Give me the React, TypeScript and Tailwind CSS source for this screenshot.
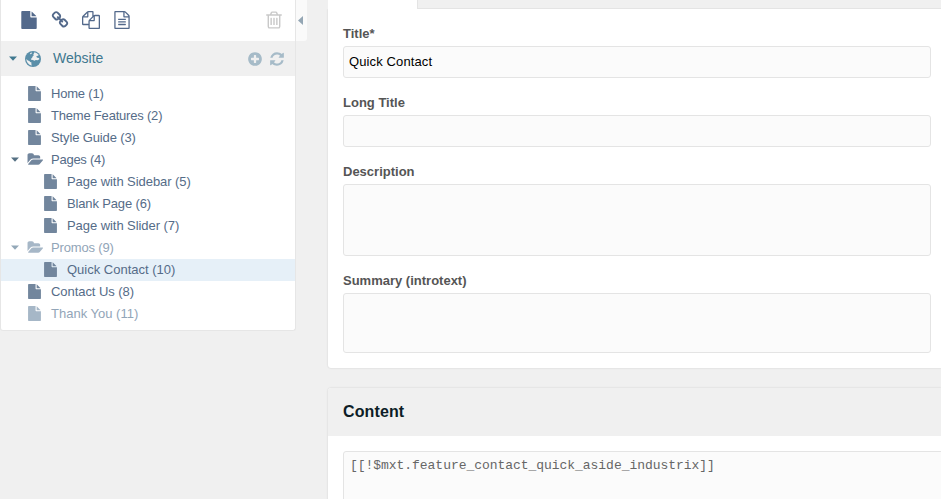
import React from "react";

const FILE =
  "M1152 512v-472q22 14 36 28l408 408q14 14 28 36h-472zm-128 32q0 40 28 68t68 28h544v1056q0 40-28 68t-68 28h-1344q-40 0-68-28t-28-68v-1600q0-40 28-68t68-28h800v544z";
const FILE_TEXT =
  "M1596 380q28 28 48 76t20 88v1152q0 40-28 68t-68 28h-1344q-40 0-68-28t-28-68v-1600q0-40 28-68t68-28h896q40 0 88 20t76 48zm-444-244v376h376q-10-29-22-41l-313-313q-12-12-41-22zm384 1528v-1024h-416q-40 0-68-28t-28-68v-416h-768v1536h1280zm-1024-864q0-14 9-23t23-9h704q14 0 23 9t9 23v64q0 14-9 23t-23 9h-704q-14 0-23-9t-9-23v-64zm736 224q14 0 23 9t9 23v64q0 14-9 23t-23 9h-704q-14 0-23-9t-9-23v-64q0-14 9-23t23-9h704zm0 256q14 0 23 9t9 23v64q0 14-9 23t-23 9h-704q-14 0-23-9t-9-23v-64q0-14 9-23t23-9h704z";
const COPY =
  "M1696 384q40 0 68 28t28 68v1216q0 40-28 68t-68 28h-960q-40 0-68-28t-28-68v-288h-544q-40 0-68-28t-28-68v-672q0-40 20-88t48-76l408-408q28-28 76-48t88-20h416q40 0 68 28t28 68v328q68-40 128-40h416zm-544 213l-299 299h299v-299zm-640-384l-299 299h299v-299zm196 647l316-316v-416h-384v416q0 40-28 68t-68 28h-416v640h512v-256q0-40 20-88t48-76zm956 804v-1152h-384v416q0 40-28 68t-68 28h-416v640h896z";
const TRASH =
  "M704 736v576q0 14-9 23t-23 9h-64q-14 0-23-9t-9-23v-576q0-14 9-23t23-9h64q14 0 23 9t9 23zm256 0v576q0 14-9 23t-23 9h-64q-14 0-23-9t-9-23v-576q0-14 9-23t23-9h64q14 0 23 9t9 23zm256 0v576q0 14-9 23t-23 9h-64q-14 0-23-9t-9-23v-576q0-14 9-23t23-9h64q14 0 23 9t9 23zm128 724v-948h-896v948q0 22 7 40.5t14.5 27 10.5 8.5h832q3 0 10.5-8.5t14.5-27 7-40.5zm-672-1076h448l-48-117q-7-9-17-11h-317q-10 2-17 11zm928 32v64q0 14-9 23t-23 9h-96v948q0 83-47 143.5t-113 60.5h-832q-66 0-113-58.5t-47-141.5v-952h-96q-14 0-23-9t-9-23v-64q0-14 9-23t23-9h309l70-167q15-37 54-63t79-26h320q40 0 79 26t54 63l70 167h309q14 0 23 9t9 23z";
const LINK =
  "M1520 1216q0-40-28-68l-208-208q-28-28-68-28-42 0-72 32 3 3 19 18.5t21.5 21.5 15 19 13 25.5 3.5 27.5q0 40-28 68t-68 28q-15 0-27.5-3.5t-25.5-13-19-15-21.5-21.5-18.5-19q-33 31-33 73 0 40 28 68l206 207q27 27 68 27 40 0 68-26l147-146q28-28 28-67zm-703-705q0-40-28-68l-206-207q-28-28-68-28-39 0-68 27l-147 146q-28 28-28 67 0 40 28 68l208 208q27 27 68 27 42 0 72-31-3-3-19-18.5t-21.5-21.5-15-19-13-25.5-3.5-27.5q0-40 28-68t68-28q15 0 27.5 3.5t25.5 13 19 15 21.5 21.5 18.5 19q33-31 33-73zm895 705q0 120-85 203l-147 146q-83 83-203 83-121 0-204-85l-206-207q-83-83-83-203 0-123 88-209l-88-88q-86 88-208 88-120 0-204-84l-208-208q-84-84-84-204t85-203l147-146q83-83 203-83 121 0 204 85l206 207q83 83 83 203 0 123-88 209l88 88q86-88 208-88 120 0 204 84l208 208q84 84 84 204z";
const PLUS =
  "M1344 960v-128q0-26-19-45t-45-19h-256v-256q0-26-19-45t-45-19h-128q-26 0-45 19t-19 45v256h-256q-26 0-45 19t-19 45v128q0 26 19 45t45 19h256v256q0 26 19 45t45 19h128q26 0 45-19t19-45v-256h256q26 0 45-19t19-45zm320-64q0 209-103 385.5t-279.5 279.5-385.5 103-385.5-103-279.5-279.5-103-385.5 103-385.5 279.5-279.5 385.5-103 385.5 103 279.5 279.5 103 385.5z";
const REFRESH =
  "M1639 1056q0 5-1 7-64 268-268 434.5t-478 166.5q-146 0-282.5-55t-243.5-157l-129 129q-19 19-45 19t-45-19-19-45v-448q0-26 19-45t45-19h448q26 0 45 19t19 45-19 45l-137 137q71 66 161 102t187 36q134 0 250-65t186-179q11-17 53-117 8-23 30-23h192q13 0 22.5 9.5t9.5 22.5zm25-800v448q0 26-19 45t-45 19h-448q-26 0-45-19t-19-45 19-45l138-138q-148-137-349-137-134 0-250 65t-186 179q-11 17-53 117-8 23-30 23h-199q-13 0-22.5-9.5t-9.5-22.5v-7q65-268 270-434.5t480-166.5q146 0 284 55.5t245 156.5l130-129q19-19 45-19t45 19 19 45z";
const FOLDER =
  "M1943 952q0 31-31 66l-336 396q-43 51-120.5 86.5t-143.5 35.5h-1088q-34 0-60.5-13t-26.5-43q0-31 31-66l336-396q43-51 120.5-86.5t143.5-35.5h1088q34 0 60.5 13t26.5 43zm-343-344v160h-832q-94 0-197 47.5t-164 119.5l-337 396-5 6q0-4-.5-12.5t-.5-12.5v-960q0-92 66-158t158-66h320q92 0 158 66t66 158v32h544q92 0 158 66t66 158z";

function Icon({ d, className, box = "0 0 1792 1792" }: { d: string; className: string; box?: string }) {
  return (
    <svg viewBox={box} fill="currentColor" className={`block shrink-0 ${className}`}>
      <path d={d} />
    </svg>
  );
}

function Globe() {
  return (
    <svg viewBox="0 0 16 16" className="ml-2 block size-4 shrink-0">
      <circle cx="8" cy="8" r="8" fill="#5b8fa9" />
      <path
        fill="#f0f0f0"
        d="M9.4 1.3l2.5.9 1.9 1.9-.9.6-1.3.2-.2 1.2 1 .7 1.7.2.2 1.3-1.6.9-1.9-.2-1.4.8-1.5-.9-1.7-.2-.3-1 1.2-.7.3-1.3 1.3-1.1-.4-1.1.6-1zM1.3 8.1l1.6 1.3 1.5.5.7 1 1.4.6-.2 1.5.6 1.6-2-.6-2-1.8-1.2-2zM5 2.4l1.3-.8.8.5-1 .9-1 .2z"
      />
    </svg>
  );
}

function CaretDown() {
  return (
    <svg viewBox="0 0 8 5" className="h-[5px] w-2 shrink-0" fill="currentColor">
      <path d="M0 .5h8L4 4.8z" />
    </svg>
  );
}

type Item = { label: string; depth: number; tracking: string; folder?: boolean; faded?: boolean; selected?: boolean };

const items: Item[] = [
  { label: "Home (1)", depth: 0, tracking: "tracking-[-0.2px]" },
  { label: "Theme Features (2)", depth: 0, tracking: "tracking-[-0.2px]" },
  { label: "Style Guide (3)", depth: 0, tracking: "tracking-[-0.13px]" },
  { label: "Pages (4)", depth: 0, tracking: "tracking-[-0.25px]", folder: true },
  { label: "Page with Sidebar (5)", depth: 1, tracking: "tracking-[-0.06px]" },
  { label: "Blank Page (6)", depth: 1, tracking: "tracking-[-0.15px]" },
  { label: "Page with Slider (7)", depth: 1, tracking: "tracking-[-0.06px]" },
  { label: "Promos (9)", depth: 0, tracking: "tracking-[-0.15px]", folder: true, faded: true },
  { label: "Quick Contact (10)", depth: 1, tracking: "tracking-normal", selected: true },
  { label: "Contact Us (8)", depth: 0, tracking: "tracking-[-0.06px]" },
  { label: "Thank You (11)", depth: 0, tracking: "tracking-normal", faded: true },
];

function TreeRow({ item }: { item: Item }) {
  return (
    <li className={`flex h-[22px] items-center ${item.depth ? "pl-[26px]" : "pl-[10px]"} ${item.selected ? "bg-[#e6f0f8]" : ""}`}>
      <div className="flex items-center">
        <span className={`flex w-4 shrink-0 pb-px ${item.faded ? "text-[#93a8b8]" : "text-[#557083]"}`}>
          {item.folder && <CaretDown />}
        </span>
        <span className={`flex w-6 shrink-0 pb-px ${item.faded ? "text-[#a6b7c7]" : "text-[#72869d]"}`}>
          {item.folder ? (
            <Icon d={FOLDER} box="0 0 1943 1792" className="h-[15px] w-[16px]" />
          ) : (
            <Icon d={FILE} box="128 0 1536 1792" className="ml-px h-[15px] w-[13px]" />
          )}
        </span>
        <span className={`whitespace-nowrap text-[13px] leading-[22px] ${item.tracking} ${item.faded ? "text-[#92a5b8]" : "text-[#556c88]"}`}>
          {item.label}
        </span>
      </div>
    </li>
  );
}

function Sidebar() {
  return (
    <aside className="flex h-[331px] w-[308px] shrink-0 items-start">
      <div className="h-[331px] w-[296px] shrink-0 rounded-b-[3px] border-x border-b border-[#e6e6e6] bg-white">
        <div className="flex h-[41px] items-center pb-[2px] pl-[19px] text-[#53698b]">
          <Icon d={FILE} className="size-[18px]" />
          <Icon d={LINK} className="ml-[13px] size-[18px]" />
          <Icon d={COPY} className="ml-[13px] size-[18px]" />
          <Icon d={FILE_TEXT} className="ml-[13px] size-[18px]" />
          <Icon d={TRASH} className="ml-auto mr-[11px] size-5 text-[#c9c9c9]" />
        </div>
        <div className="flex h-[35px] items-center bg-[#f0f0f0] pl-[8px] text-[#40788f]">
          <CaretDown />
          <Globe />
          <span className="ml-3 pb-[2px] text-[14px] leading-[20px]">Website</span>
          <Icon d={PLUS} className="ml-auto size-4 text-[#a6bbc8]" />
          <Icon d={REFRESH} className="ml-[6px] mr-[10px] size-4 text-[#a6bbc8]" />
        </div>
        <ul className="pt-[7px]">
          {items.map((item) => (
            <TreeRow key={item.label} item={item} />
          ))}
        </ul>
      </div>
      <div className="flex h-[41px] w-[11px] items-center rounded-br-[3px] bg-[#fafafa] pl-[2px]">
        <svg viewBox="0 0 5 9" className="h-[9px] w-[5px]" fill="#94a6b4">
          <path d="M5 0v9L0 4.5z" />
        </svg>
      </div>
    </aside>
  );
}

function Field({ label, value, boxClass }: { label: string; value?: string; boxClass: string }) {
  return (
    <div>
      <div className="h-[22px] pt-px text-[13px] font-bold leading-[18px] text-[#555]">{label}</div>
      <div className={`w-[588px] rounded-[3px] border border-[#e4e4e4] bg-[#fbfbfb] px-[5px] text-[13px] leading-[30px] tracking-[0.12px] text-black ${boxClass}`}>
        {value}
      </div>
    </div>
  );
}

export default function App() {
  return (
    <div className="flex h-[499px] w-[941px] overflow-hidden bg-[#f0f0f0] font-['Liberation_Sans',Arial,sans-serif]">
      <Sidebar />
      <main className="ml-5 w-[613px] shrink-0">
        <div className="flex h-[9px]">
          <div className="w-[89px] bg-white" />
          <div className="flex-1 border-b border-l border-[#e4e4e4]" />
        </div>
        <section className="h-[359px] rounded-bl-[3px] bg-white pl-[15px] pt-[15px] shadow-[0_0_2px_rgba(0,0,0,0.16)] [clip-path:inset(0_-3px_-3px_-3px)]">
          <Field label="Title*" value="Quick Contact" boxClass="mb-[15px] h-8" />
          <Field label="Long Title" boxClass="mb-[15px] h-8" />
          <Field label="Description" boxClass="mb-[15px] h-[72px]" />
          <Field label="Summary (introtext)" boxClass="h-[60px]" />
        </section>
        <section className="mt-5 h-[130px] rounded-tl-[3px] bg-white shadow-[0_0_2px_rgba(0,0,0,0.16)]">
          <h2 className="h-12 rounded-tl-[3px] bg-[#f0f0f0] pl-[15px] text-[16px] font-bold leading-[47px] tracking-[0.12px] text-[#0d1d27]">Content</h2>
          <div className="ml-[15px] mt-[15px] h-[80px] w-[620px] rounded-[3px] border border-[#e4e4e4] bg-[#fbfbfb] pl-[6px] pt-[5px] font-['Liberation_Mono','Courier_New',monospace] text-[13px] leading-[18px] tracking-[-0.04px] text-[#666]">
            [[!$mxt.feature_contact_quick_aside_industrix]]
          </div>
        </section>
      </main>
    </div>
  );
}
